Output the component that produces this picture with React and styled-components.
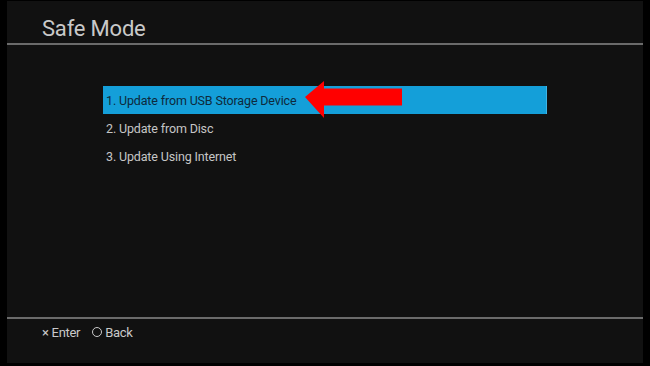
import React from 'react';
import styled, { createGlobalStyle } from 'styled-components';

const Global = createGlobalStyle`
  html, body {
    margin: 0;
    padding: 0;
    background: #000;
  }
  * {
    box-sizing: border-box;
  }
`;

const Screen = styled.div`
  width: 650px;
  height: 366px;
  padding: 1px 7px 3px 7px;
  background: #000;
  font-family: Roboto, "Noto Sans", sans-serif;
`;

const Panel = styled.div`
  display: flex;
  flex-direction: column;
  height: 100%;
  background: #111111;
`;

const Header = styled.div`
  height: 42px;
  display: flex;
  align-items: flex-end;
  padding: 0 0 1px 35px;
`;

const Title = styled.h1`
  margin: 0;
  font-size: 22px;
  font-weight: 400;
  color: #c9c9c9;
  letter-spacing: -0.2px;
  line-height: 26px;
`;

const Rule = styled.div`
  height: 2px;
  background: #6b6b6b;
`;

const Menu = styled.div`
  flex: 1;
  display: flex;
  flex-direction: column;
  padding: 41px 0 0 96px;
`;

const Row = styled.div`
  position: relative;
  width: 444px;
  height: 28px;
  display: flex;
  align-items: center;
  padding-left: 3px;
  font-size: 12.5px;
  letter-spacing: -0.15px;
  color: ${props => (props.active ? '#0e2a3c' : '#c6c6c6')};
  background: ${props => (props.active ? '#149fd9' : 'transparent')};
  border-right: ${props => (props.active ? '1px solid #3db4e6' : 'none')};
`;

const Arrow = styled.svg`
  position: absolute;
  left: 202px;
  top: -5px;
`;

const Footer = styled.div`
  height: 44px;
  display: flex;
  gap: 12px;
  padding: 5px 0 0 35px;
`;

const Hint = styled.span`
  display: flex;
  align-items: center;
  gap: 3px;
  height: 16px;
  font-size: 13px;
  color: #c9c9c9;
  letter-spacing: -0.3px;
`;

const Circle = styled.span`
  width: 10px;
  height: 10px;
  border: 1.5px solid #c9c9c9;
  border-radius: 50%;
`;

const items = [
  'Update from USB Storage Device',
  'Update from Disc',
  'Update Using Internet'
];

export default function App() {
  return (
    <>
      <Global />
      <Screen>
        <Panel>
          <Header>
            <Title>Safe Mode</Title>
          </Header>
          <Rule />
          <Menu>
            {items.map((label, i) => (
              <Row key={label} active={i === 0}>
                {i + 1}. {label}
                {i === 0 && (
                  <Arrow width="100" height="44" viewBox="0 0 100 44">
                    <polygon
                      points="0,16 19,0 19,7.5 97,7.5 97,24.5 19,24.5 19,37"
                      fill="#ff0000"
                    />
                  </Arrow>
                )}
              </Row>
            ))}
          </Menu>
          <Rule />
          <Footer>
            <Hint>× Enter</Hint>
            <Hint>
              <Circle />
              Back
            </Hint>
          </Footer>
        </Panel>
      </Screen>
    </>
  );
}
